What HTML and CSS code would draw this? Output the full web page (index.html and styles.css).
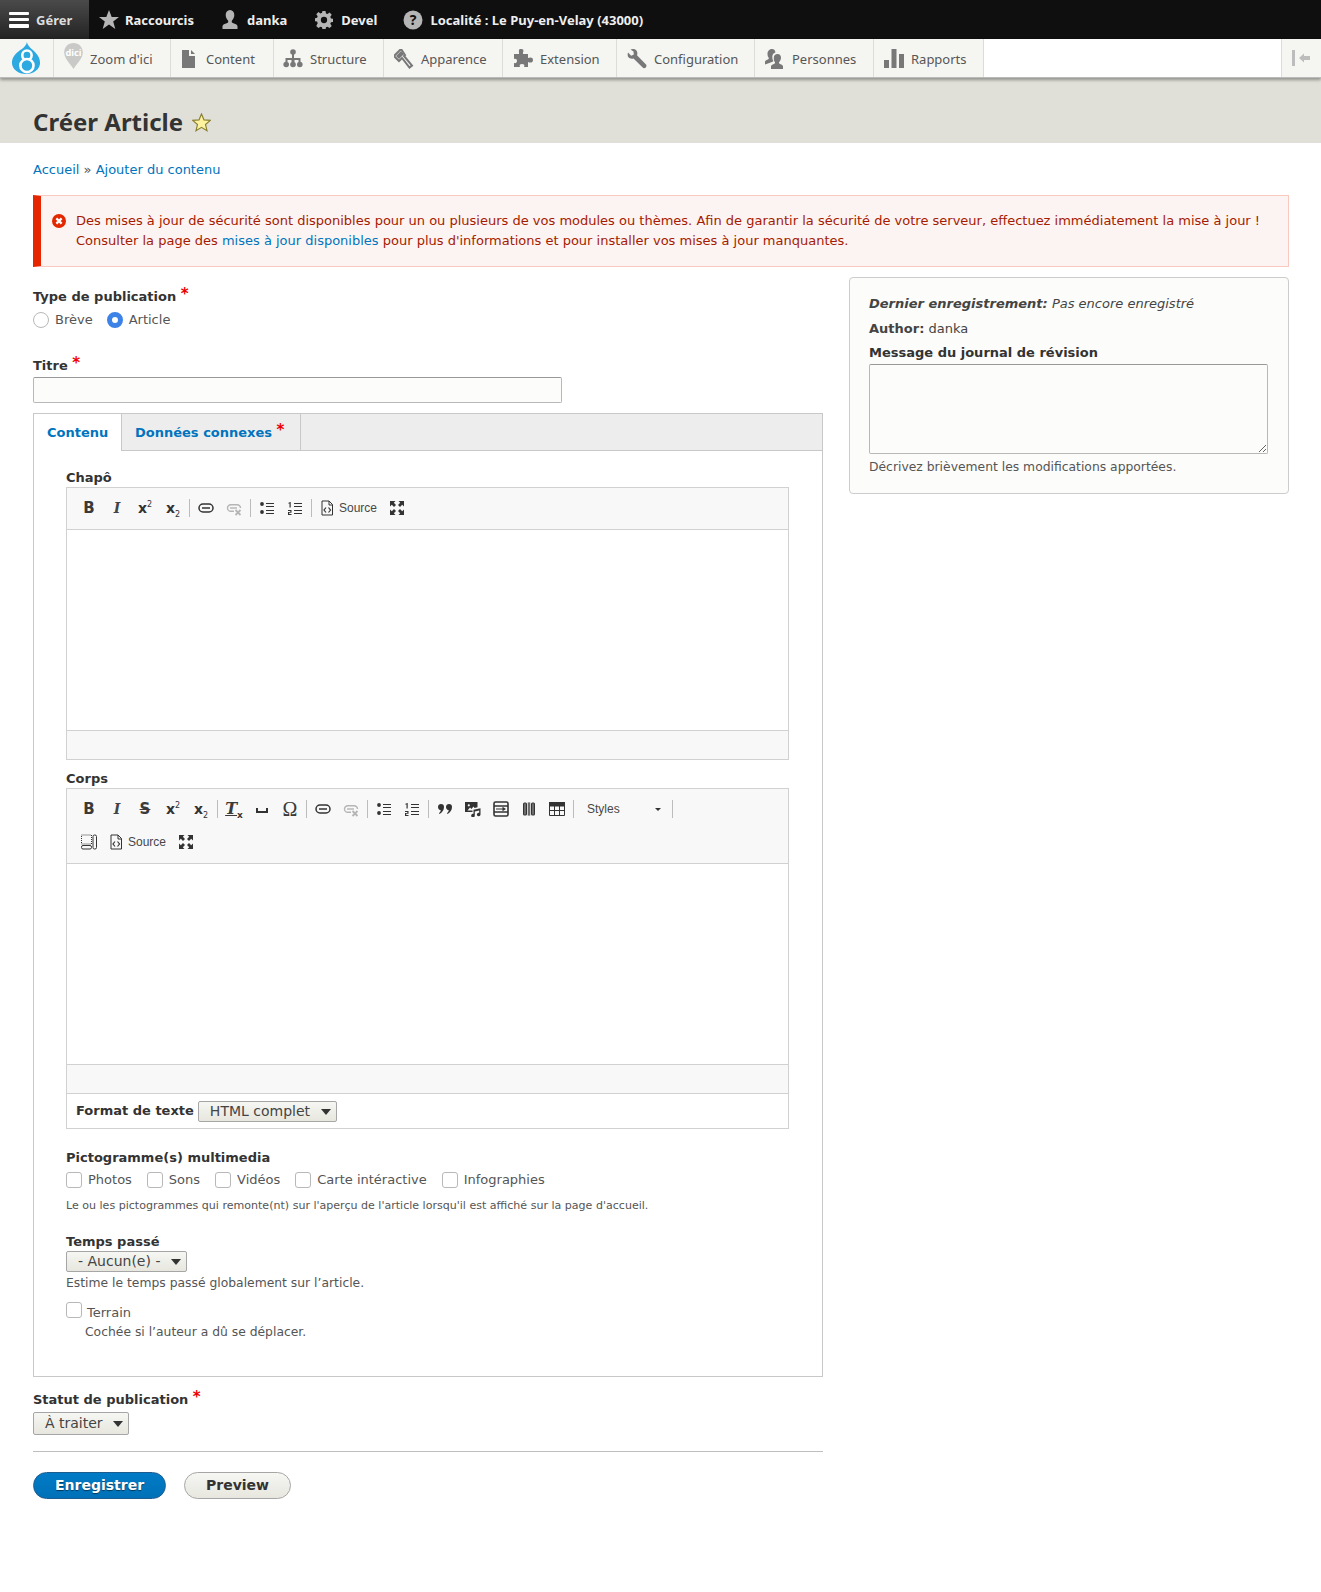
FILE: index.html
```html
<!DOCTYPE html>
<html lang="fr">
<head>
<meta charset="utf-8">
<title>Créer Article</title>
<link rel="stylesheet" href="styles.css">
</head>
<body>
<svg class="defs" width="0" height="0" aria-hidden="true">
  <symbol id="i-star" viewBox="0 0 20 20"><path d="M10 0l2.700 7H20l-5.800 4.600L16.300 19 10 14.600 3.700 19l2.100-7.400L0 7h7.300z"/></symbol>
  <symbol id="i-user" viewBox="0 0 20 20"><path d="M10 0c2.700 0 4.300 2.200 4.300 5 0 2.400-1.200 4.400-2.300 5.400-.5.600-.3 2 .4 2.400 1.800.9 4.600 1.500 5.100 3.200v3H2.500v-3c.5-1.700 3.300-2.300 5.100-3.200.7-.4.900-1.800.4-2.400C6.900 9.400 5.700 7.400 5.700 5 5.700 2.200 7.300 0 10 0z"/></symbol>
  <symbol id="i-gear" viewBox="0 0 20 20"><path fill-rule="evenodd" d="M8.300 0h3.400l.5 2.700 1.700.7L16.200 1.800l2.400 2.400-1.600 2.300.7 1.700 2.700.5v3.400l-2.700.5-.7 1.700 1.600 2.300-2.400 2.400-2.300-1.600-1.700.7-.5 2.700H8.300l-.5-2.700-1.700-.7-2.300 1.600-2.400-2.400L3 13.500l-.7-1.700L-.4 11.300V8l2.700-.5L3 5.800 1.400 3.500l2.400-2.400 2.300 1.600 1.700-.7zM10 6.500a3.500 3.500 0 1 0 0 7 3.500 3.500 0 0 0 0-7z"/></symbol>
  <symbol id="i-doc" viewBox="0 0 16 20"><path d="M1 1h7v6h6v12H1z"/><path d="M10 1l4 4h-4z"/></symbol>
  <symbol id="i-tree" viewBox="0 0 20 20"><circle cx="10" cy="3" r="2.800"/><rect x="9" y="4" width="2" height="9"/><path d="M2.500 9h15v4h-2v-2h-4v2h-3v-2h-4v2h-2z"/><circle cx="3.200" cy="15.500" r="2.800"/><circle cx="10" cy="15.500" r="2.800"/><circle cx="16.800" cy="15.500" r="2.800"/></symbol>
  <symbol id="i-hammer" viewBox="0 0 20 20"><path d="M7 0L0 7l5 5 3-3 7.500 9.500 2.500-2L10 7l1-1z" fill="none" stroke-width="2" stroke="currentColor"/><path d="M7 2L2 7l3 3 5-5z"/></symbol>
  <symbol id="i-puzzle" viewBox="0 0 20 20"><path d="M1 5h5V3.500C6 1 5.500 0 8 0s3 1 2 3.500V5h5v4c2-1 5-1 5 2s-3 3-5 2v5h-4c1-2 0-3-2-3s-3 1-2 3H1v-4c2 .5 3-.5 3-2s-1-2.500-3-2z"/></symbol>
  <symbol id="i-wrench" viewBox="0 0 20 20"><path d="M1 3.500L4.200 6.700 6.800 5.600 6.500 2.500 3.500.500C6-.5 9-.2 10 2.500c.6 1.500.4 2.800 0 3.700l9 9.300c.8 1 .6 2-.2 3-1 1-2.300 1-3.100 0L6.500 9.500C4.500 10 2.800 9.700 1.500 8.300.4 7 .5 5 1 3.500z"/></symbol>
  <symbol id="i-users" viewBox="0 0 20 20"><path d="M12.500 5c2.200 0 3.500 1.700 3.500 3.800 0 1.900-1 3.300-1.800 4.200-.4.500-.2 1.300.3 1.700 1.500.7 3.500 1.200 3.500 2.500V20H6v-2.800c0-1.300 2-1.800 3.500-2.500.5-.4.700-1.200.3-1.700C9 12.100 8.800 10.700 8.800 8.800 8.800 6.700 10.300 5 12.500 5z"/><path d="M7 0c2.200 0 3.400 1.500 3.400 3.600-2.500.7-3.300 3-3 5.300.1 1.300.5 2 1 3.100-.5.700-2 1.200-3.400 1.700L0 15.500v-2.700c0-1.300 2-1.800 3.300-2.500.5-.4.700-1.200.3-1.700C2.800 7.700 2.500 6.300 2.500 4.500 2.500 2 4.800 0 7 0z"/></symbol>
  <symbol id="i-bars" viewBox="0 0 20 20"><rect x="0" y="11" width="5" height="8"/><rect x="7.500" y="0" width="5" height="19"/><rect x="15" y="5" width="5" height="14"/></symbol>
  <symbol id="c-link" viewBox="0 0 16 16"><g fill="none" stroke="currentColor" stroke-width="1.500"><rect x="1" y="4" width="14" height="8" rx="4"/><path d="M4 8h8"/></g></symbol>
  <symbol id="c-unlink" viewBox="0 0 16 16"><g fill="none" stroke="#b5b5b5" stroke-width="1.400"><path d="M8 11.300H4.800a3.300 3.300 0 0 1 0-6.600h6.400a3.300 3.300 0 0 1 3.300 3.300"/><path d="M4 8h7"/><path d="M9.500 10l5 5M14.500 10l-5 5" stroke-width="1.800"/></g></symbol>
  <symbol id="c-ul" viewBox="0 0 16 16"><circle cx="3" cy="4" r="1.900"/><circle cx="3" cy="12" r="1.900"/><path d="M7 3h8v1H7zM7 6h8v1H7zM7 10h8v1H7zM7 13h8v1H7z"/></symbol>
  <symbol id="c-ol" viewBox="0 0 16 16"><path d="M7 3h8v1H7zM7 6h8v1H7zM7 10h8v1H7zM7 13h8v1H7z"/><path d="M2.500 2h1.200v5.500H2.500zM1.300 2.800h1.500v.8H1.300z"/><path d="M1 10h3.500v2.800H2.200v1.200h2.300v1H1v-3h2.300v-1H1z"/></symbol>
  <symbol id="c-source" viewBox="0 0 16 16"><path d="M3 1h7l3.500 3.500V15H3z" fill="none" stroke="currentColor"/><path d="M10 1v4h3.500" fill="none" stroke="currentColor"/><path d="M7 7.500L5 10l2 2.500M9.500 7.500l2 2.500-2 2.500" fill="none" stroke="currentColor" stroke-width="1.200"/></symbol>
  <symbol id="c-max" viewBox="0 0 16 16"><path d="M1 1h5.500L4.800 2.800 7 5 5 7 2.800 4.800 1 6.500zM15 1v5.500l-1.800-1.700L11 7 9 5l2.200-2.200L9.500 1zM1 15V9.500l1.800 1.700L5 9l2 2-2.200 2.200L6.500 15zM15 15H9.500l1.700-1.800L9 11l2-2 2.200 2.200L15 9.500z"/></symbol>
  <symbol id="c-space" viewBox="0 0 16 16"><path d="M2 7h2v3h8V7h2v5H2z"/></symbol>
  <symbol id="c-quote" viewBox="0 0 16 16"><path d="M4 3c2 0 3 1.300 3 3 0 3-1.800 5.500-4.500 7L2 12.200c1-.9 1.700-1.900 1.900-3C2.300 9.100 1 8 1 6c0-1.700 1.300-3 3-3zM12 3c2 0 3 1.300 3 3 0 3-1.800 5.500-4.500 7l-.5-.8c1-.9 1.700-1.900 1.900-3-1.600-.1-2.900-1.200-2.900-3.200 0-1.700 1.300-3 3-3z"/></symbol>
  <symbol id="c-media" viewBox="0 0 16 16"><path d="M0 1h12.500v5.300L9.500 7l-1-1.500L6.500 8 5 6.500 2.500 9.500h5V11H0z"/><circle cx="3.800" cy="4.300" r="1.100" fill="#f8f8f8"/><path d="M8.500 8.800l7-1.600v6.300a1.800 1.800 0 1 1-1.300-1.700V9.400l-4.400 1v4.100a1.800 1.800 0 1 1-1.300-1.700z"/></symbol>
  <symbol id="c-form" viewBox="0 0 16 16"><rect x="1" y="1" width="14" height="14" rx="1.500" fill="none" stroke="currentColor" stroke-width="1.600"/><path d="M1 4.300h14v1.400H1zM1 10.300h14v1.400H1zM3 7.400h7v1.200H3z"/><path d="M9.500 5.800L13 8l-3.500 2.200z"/></symbol>
  <symbol id="c-cols" viewBox="0 0 16 16"><rect x="2" y="1.500" width="4" height="13" rx="1.500"/><rect x="10" y="1.500" width="4" height="13" rx="1.500"/><path d="M6.800 1.500h2.400v13H6.800z"/><path d="M4 2.500v11M8 1.500v13M12 2.500v11" stroke="#f7f7f7" stroke-width=".6"/></symbol>
  <symbol id="c-table" viewBox="0 0 16 16"><path d="M0 1h16v4H0z"/><path d="M.5 1.500h15v13H.5zM.5 5h15M.5 9.500h15M5.500 5v9.500M10.500 5v9.500" fill="none" stroke="currentColor"/></symbol>
  <symbol id="c-blocks" viewBox="0 0 16 16"><rect x=".5" y="1" width="10" height="9" fill="none" stroke="currentColor" stroke-dasharray="1 1"/><rect x=".5" y="11.500" width="10" height="3.500" rx="1.500" fill="none" stroke="currentColor"/><rect x="12" y="1" width="3.500" height="14" rx="1.500" fill="none" stroke="currentColor"/></symbol>
</svg>

<header class="bar-top">
  <a class="top-item top-active">
    <span class="burger"><i></i><i></i><i></i></span>Gérer
  </a>
  <a class="top-item top-short"><svg class="top-ic"><use href="#i-star"/></svg>Raccourcis</a>
  <a class="top-item"><svg class="top-ic"><use href="#i-user"/></svg>danka</a>
  <a class="top-item"><svg class="top-ic top-gear"><use href="#i-gear"/></svg>Devel</a>
  <a class="top-item top-last">
    <svg class="top-ic" viewBox="0 0 20 20"><circle cx="10" cy="10" r="9.500"/><text x="10" y="15" class="help-q">?</text></svg>Localité : Le Puy-en-Velay (43000)
  </a>
</header>

<nav class="bar-nav">
  <a class="nav-logo">
    <svg viewBox="0 0 32 34" width="30" height="32">
      <path d="M17 0c1 5 5 7 9 11 3 3 5 7 5 11 0 7-7 12-15 12S1 29 1 22c0-5 3-9 7-12 4-3 8-5 9-10z" fill="#2ba9e0"/>
      <circle cx="17" cy="14" r="5" fill="#2ba9e0" stroke="#fff" stroke-width="2.800"/>
      <circle cx="17" cy="25" r="7" fill="#2ba9e0" stroke="#fff" stroke-width="2.800"/>
    </svg>
  </a>
  <a class="nav-item w-zoom">
    <svg class="pin" viewBox="0 0 20 28" width="19" height="26"><path d="M10 0c6 0 10 4.500 10 10.500 0 6-6 11-10 17.500C6 21.500 0 16.500 0 10.500 0 4.500 4 0 10 0z" fill="#c9c9c7"/><text x="10" y="14" class="pin-t">dici</text></svg>
    Zoom d'ici
  </a>
  <a class="nav-item w-content"><svg class="nav-ic nav-doc"><use href="#i-doc"/></svg>Content</a>
  <a class="nav-item w-structure"><svg class="nav-ic nav-tree"><use href="#i-tree"/></svg>Structure</a>
  <a class="nav-item w-apparence"><svg class="nav-ic"><use href="#i-hammer"/></svg>Apparence</a>
  <a class="nav-item w-extension"><svg class="nav-ic"><use href="#i-puzzle"/></svg>Extension</a>
  <a class="nav-item w-config"><svg class="nav-ic"><use href="#i-wrench"/></svg>Configuration</a>
  <a class="nav-item w-people"><svg class="nav-ic"><use href="#i-users"/></svg>Personnes</a>
  <a class="nav-item w-reports"><svg class="nav-ic"><use href="#i-bars"/></svg>Rapports</a>
  <span class="nav-fill"></span>
  <a class="nav-toggle">
    <svg viewBox="0 0 20 16" width="20" height="16"><rect x="0" y="0" width="3" height="16" fill="#bdbdbd"/><path d="M7 8l5-4.500V6h6v4h-6v2.500z" fill="#bdbdbd"/></svg>
  </a>
</nav>

<div class="page-head">
  <h1 class="page-title">Créer Article
    <svg class="fav" viewBox="0 0 20 20" width="19" height="19"><path d="M10 1l2.600 6.200 6.700.5-5.100 4.400 1.600 6.600L10 15.100l-5.800 3.600 1.600-6.600L.7 7.700l6.700-.5z" fill="#fff3a0" stroke="#8a8030" stroke-width="1.200"/></svg>
  </h1>
</div>

<main class="content">
  <div class="crumbs"><a href="#">Accueil</a> » <a href="#">Ajouter du contenu</a></div>

  <div class="msg">
    <svg class="msg-ic" viewBox="0 0 16 16" width="14" height="14"><circle cx="8" cy="8" r="8" fill="#e32700"/><path d="M5 5l6 6M11 5l-6 6" stroke="#fff" stroke-width="2.600"/></svg>
    <div>Des mises à jour de sécurité sont disponibles pour un ou plusieurs de vos modules ou thèmes. Afin de garantir la sécurité de votre serveur, effectuez immédiatement la mise à jour !<br>Consulter la page des <a href="#">mises à jour disponibles</a> pour plus d'informations et pour installer vos mises à jour manquantes.</div>
  </div>

  <form class="layout">
    <div class="col-main">
      <div class="lbl">Type de publication <span class="req">*</span></div>
      <div class="radios">
        <label class="opt"><input type="radio" name="t" class="radio">Brève</label>
        <label class="opt"><input type="radio" name="t" class="radio" checked>Article</label>
      </div>

      <div class="lbl lbl-titre">Titre <span class="req">*</span></div>
      <input type="text" class="txt">

      <section class="tabs">
        <div class="tab-bar">
          <a class="tab tab-on">Contenu</a>
          <a class="tab tab-data">Données connexes <span class="req">*</span></a>
        </div>
        <div class="panel">
          <div class="lbl">Chapô</div>
          <div class="cke">
            <div class="cke-tools">
              <div class="cke-row">
                <a class="cb"><span class="g g-b">B</span></a>
                <a class="cb"><span class="g g-i">I</span></a>
                <a class="cb"><span class="g g-x">x<sup>2</sup></span></a>
                <a class="cb"><span class="g g-x">x<sub>2</sub></span></a>
                <i class="sep"></i>
                <a class="cb"><svg class="ci"><use href="#c-link"/></svg></a>
                <a class="cb"><svg class="ci"><use href="#c-unlink"/></svg></a>
                <i class="sep"></i>
                <a class="cb"><svg class="ci"><use href="#c-ul"/></svg></a>
                <a class="cb"><svg class="ci"><use href="#c-ol"/></svg></a>
                <i class="sep"></i>
                <a class="cb cb-src"><svg class="ci"><use href="#c-source"/></svg><span>Source</span></a>
                <a class="cb"><svg class="ci"><use href="#c-max"/></svg></a>
              </div>
            </div>
            <div class="cke-body"></div>
            <div class="cke-foot"></div>
          </div>

          <div class="lbl lbl-corps">Corps</div>
          <div class="cke">
            <div class="cke-tools">
              <div class="cke-row">
                <a class="cb"><span class="g g-b">B</span></a>
                <a class="cb"><span class="g g-i">I</span></a>
                <a class="cb"><span class="g g-s">S</span></a>
                <a class="cb"><span class="g g-x">x<sup>2</sup></span></a>
                <a class="cb"><span class="g g-x">x<sub>2</sub></span></a>
                <i class="sep"></i>
                <a class="cb"><span class="g g-tx">T<sub>x</sub></span></a>
                <a class="cb"><svg class="ci"><use href="#c-space"/></svg></a>
                <a class="cb"><span class="g g-om">Ω</span></a>
                <i class="sep"></i>
                <a class="cb"><svg class="ci"><use href="#c-link"/></svg></a>
                <a class="cb"><svg class="ci"><use href="#c-unlink"/></svg></a>
                <i class="sep"></i>
                <a class="cb"><svg class="ci"><use href="#c-ul"/></svg></a>
                <a class="cb"><svg class="ci"><use href="#c-ol"/></svg></a>
                <i class="sep"></i>
                <a class="cb"><svg class="ci"><use href="#c-quote"/></svg></a>
                <a class="cb"><svg class="ci"><use href="#c-media"/></svg></a>
                <a class="cb"><svg class="ci"><use href="#c-form"/></svg></a>
                <a class="cb"><svg class="ci"><use href="#c-cols"/></svg></a>
                <a class="cb"><svg class="ci"><use href="#c-table"/></svg></a>
                <i class="sep"></i>
                <a class="cb-styles"><span>Styles</span><i class="caret"></i></a>
                <i class="sep"></i>
              </div>
              <div class="cke-row">
                <a class="cb"><svg class="ci"><use href="#c-blocks"/></svg></a>
                <a class="cb cb-src"><svg class="ci"><use href="#c-source"/></svg><span>Source</span></a>
                <a class="cb"><svg class="ci"><use href="#c-max"/></svg></a>
              </div>
            </div>
            <div class="cke-body"></div>
            <div class="cke-foot"></div>
            <div class="cke-format">
              <span class="fmt-lbl">Format de texte</span>
              <span class="sel sel-fmt">HTML complet</span>
            </div>
          </div>

          <div class="lbl lbl-picto">Pictogramme(s) multimedia</div>
          <div class="checks">
            <label class="chk-opt"><input type="checkbox" class="chk">Photos</label>
            <label class="chk-opt"><input type="checkbox" class="chk">Sons</label>
            <label class="chk-opt"><input type="checkbox" class="chk">Vidéos</label>
            <label class="chk-opt"><input type="checkbox" class="chk">Carte intéractive</label>
            <label class="chk-opt"><input type="checkbox" class="chk">Infographies</label>
          </div>
          <p class="hint-small">Le ou les pictogrammes qui remonte(nt) sur l'aperçu de l'article lorsqu'il est affiché sur la page d'accueil.</p>

          <div class="lbl lbl-temps">Temps passé</div>
          <span class="sel sel-temps">- Aucun(e) -</span>
          <p class="hint hint-temps">Estime le temps passé globalement sur l’article.</p>

          <label class="terrain"><input type="checkbox" class="chk">Terrain</label>
          <p class="hint hint-in">Cochée si l’auteur a dû se déplacer.</p>
        </div>
      </section>

      <div class="lbl lbl-statut">Statut de publication <span class="req">*</span></div>
      <span class="sel sel-statut">À traiter</span>
      <hr class="rule">
      <div class="actions">
        <button type="button" class="btn btn-primary">Enregistrer</button>
        <button type="button" class="btn">Preview</button>
      </div>
    </div>

    <aside class="side">
      <div class="side-line"><em><b>Dernier enregistrement:</b> Pas encore enregistré</em></div>
      <div class="side-line side-author"><b>Author:</b> danka</div>
      <div class="lbl side-msg">Message du journal de révision</div>
      <textarea class="area"></textarea>
      <p class="hint side-hint">Décrivez brièvement les modifications apportées.</p>
    </aside>
  </form>
</main>
</body>
</html>
```

FILE: styles.css
```css
* { box-sizing: border-box; }
html, body { margin: 0; padding: 0; background: #fff; }
body { min-height: 1592px; font: 13px/20px "DejaVu Sans", sans-serif; color: #333; }
a { color: #0074bd; text-decoration: none; }
.defs { position: absolute; }

/* top bar */
.bar-top { display: flex; height: 39px; background: #0f0f0f; font: bold 13px/40px "Noto Sans", sans-serif; color: #fff; }
.top-item { display: flex; align-items: center; padding: 0 14px 0 10px; color: #eee; margin-right: 3px; }
.top-active { width: 89px; padding: 0 0 0 9px; margin-right: 0; background: linear-gradient(#4a4a4a, #232323); color: #ddd; }
.top-short { padding-right: 13px; }
.top-last { padding-left: 9px; }
.burger { display: flex; flex-direction: column; justify-content: space-between; width: 20px; height: 16px; margin-right: 7px; }
.burger i { display: block; height: 3.500px; border-radius: 1px; background: #fff; }
.top-ic { width: 20px; height: 20px; margin-right: 7px; fill: #b5b5b5; }
.top-short .top-ic { margin-right: 6px; }
.top-gear { padding: 1px; }
.help-q { font: bold 14px "Noto Sans", sans-serif; fill: #0f0f0f; text-anchor: middle; }

/* nav bar */
.bar-nav { display: flex; position: relative; height: 39px; background: #fff; font: 13px/38px "Noto Sans", sans-serif; color: #565656; border-bottom: 1px solid #bbb; box-shadow: 0 2px 3px rgba(0,0,0,.35); }
.nav-logo { display: flex; align-items: center; justify-content: center; width: 54px; padding-right: 2px; background: #f5f5f2; border-right: 1px solid #dcdcd8; }
.nav-item { display: flex; align-items: center; padding: 2px 0 0 10px; background: #f5f5f2; color: #565656; border-right: 1px solid #dcdcd8; }
.nav-ic { width: 20px; height: 20px; margin-right: 7px; fill: #787878; color: #787878; flex: none; }
.nav-doc { width: 16px; margin: 0 9px 0 0; }
.nav-tree { margin: 0 7px 0 -1px; }
.pin { margin-right: 7px; margin-top: -6px; flex: none; }
.pin-t { font: bold 10px "Noto Sans", sans-serif; fill: #fff; text-anchor: middle; }
.w-zoom { width: 117px; }
.w-content { width: 103px; }
.w-structure { width: 110px; }
.w-apparence { width: 119px; }
.w-extension { width: 114px; }
.w-config { width: 138px; }
.w-people { width: 119px; }
.w-reports { width: 110px; }
.nav-fill { flex: 1; }
.nav-toggle { display: flex; align-items: center; justify-content: center; width: 40px; background: #f5f5f2; border-left: 1px solid #dcdcd8; }

/* head */
.page-head { height: 65px; padding: 28px 0 0 33px; background: #e0e0d8; }
.page-title { display: flex; align-items: center; margin: 0; font: bold 24px/32px "Noto Sans", sans-serif; color: #333; }
.fav { margin-left: 9px; }

/* content */
.content { padding: 17px 32px 0 33px; }
.crumbs { color: #555; }
.msg { display: flex; height: 72px; margin-top: 15px; padding: 15px 10px 0 8px; color: #a51b00; background: #fcf4f2; border: 1px solid #f9c9bf; border-left: 8px solid #e62600; }
.msg-ic { flex: none; margin: 3px 10px 0 3px; }
.layout { display: grid; grid-template-columns: 790px 440px; column-gap: 26px; align-items: start; margin-top: 10px; }
.col-main { padding-top: 10px; }

.lbl { font-weight: bold; color: #333; }
.req { position: relative; top: -2px; color: #e00; font-size: 15px; line-height: 0; }
.radios { display: flex; margin-top: 3px; color: #555; }
.opt { display: flex; align-items: center; margin-right: 14px; }
.radio { appearance: none; width: 16px; height: 16px; margin: 0 6px 0 0; border: 1px solid #b8b8b8; border-radius: 50%; background: #fff; }
.radio:checked { border: 5px solid #3d82e6; }
.lbl-titre { margin-top: 26px; }
.txt { display: block; width: 529px; height: 26px; margin-top: 1px; background: #fcfcfa; border: 1px solid #b8b8b8; border-top-color: #999; border-radius: 2px; }

.tabs { margin-top: 10px; border: 1px solid #c8c8c8; }
.tab-bar { display: flex; height: 37px; background: #ededed; border-bottom: 1px solid #c8c8c8; font-weight: bold; line-height: 38px; }
.tab { padding: 0 13px; border-right: 1px solid #c8c8c8; }
.tab-on { width: 88px; margin-bottom: -1px; height: 37px; background: #fff; }
.tab-data { padding-right: 16px; }
.panel { padding: 17px 32px 34px 32px; }

.cke { margin-top: -1px; width: 723px; border: 1px solid #d1d1d1; font-family: "Liberation Sans", sans-serif; }
.cke-tools { padding: 4px 8px 5px; background: #f8f8f8; border-bottom: 1px solid #d1d1d1; }
.cke-row { display: flex; align-items: center; height: 32px; }
.cke-row + .cke-row { margin-top: 1px; }
.cb { display: flex; align-items: center; justify-content: center; flex: none; width: 28px; height: 28px; color: #333; fill: #333; }
.ci { width: 16px; height: 16px; fill: #333; color: #333; }
.sep { flex: none; width: 1px; height: 18px; margin: 0 2px; background: #bcbcbc; }
.cb-src { width: 69px; justify-content: flex-start; padding-left: 5px; font-size: 12px; color: #474747; }
.cb-src span { margin-left: 4px; }
.g { display: block; line-height: 16px; color: #333; }
.g-b { font: bold 15px/16px "DejaVu Sans", sans-serif; color: #3a3a3a; }
.g-i { font: italic bold 14px/16px "DejaVu Serif", serif; color: #444; }
.g-s { font: bold 15px/16px "DejaVu Sans", sans-serif; color: #3a3a3a; text-decoration: line-through; }
.g-x { font: bold 14px/16px "DejaVu Sans", sans-serif; }
.g-x sup, .g-x sub { font-size: 8px; line-height: 0; font-weight: normal; }
.g-tx { font: italic bold 16px/16px "DejaVu Serif", serif; text-decoration: underline; color: #3a3a3a; }
.g-tx sub { font: bold 9px/0 "DejaVu Sans", sans-serif; }
.g-om { font: 20px/16px "Liberation Serif", serif; color: #3a3a3a; }
.cb-styles { display: flex; align-items: center; justify-content: space-between; flex: none; width: 94px; padding: 0 9px 0 11px; font-size: 12px; color: #474747; }
.caret { width: 0; height: 0; border: 3px solid transparent; border-top-color: #333; border-bottom: 0; }
.cke-body { height: 200px; background: #fff; }
.cke-foot { height: 29px; background: #f8f8f8; border-top: 1px solid #d1d1d1; }
.cke-format { display: flex; align-items: center; height: 35px; padding-left: 9px; background: #fff; border-top: 1px solid #d1d1d1; font-family: "DejaVu Sans", sans-serif; }
.fmt-lbl { font-weight: bold; margin-right: 4px; }
.lbl-corps { margin-top: 9px; }

.sel { display: block; position: relative; height: 21px; padding: 0 0 0 11px; font: 14px/19px "DejaVu Sans", sans-serif; color: #444; background: linear-gradient(#f6f6f3, #e7e7df); border: 1px solid #a6a6a6; border-radius: 2px; }
.sel::after { content: ""; position: absolute; right: 5px; top: 7px; border: 5px solid transparent; border-top: 6px solid #333; border-bottom: 0; }
.sel-fmt { width: 139px; }
.sel-temps { width: 121px; margin-top: -1px; }
.sel-statut { width: 96px; height: 23px; margin-top: 2px; line-height: 20px; }
.sel-statut::after { top: 8px; }

.lbl-picto { margin-top: 19px; }
.checks { display: flex; margin-top: 2px; color: #555; }
.chk-opt { display: flex; align-items: center; }
.chk-opt + .chk-opt { margin-left: 15px; }
.chk { appearance: none; flex: none; width: 16px; height: 16px; margin: 0 6px 0 0; background: #fff; border: 1px solid #b8b8b8; border-radius: 3px; }
.hint-small { margin: 8px 0 0; font-size: 11.050px; line-height: 16px; color: #555; }
.lbl-temps { margin-top: 18px; }
.hint { margin: 0; font-size: 12.350px; color: #555; }
.hint-temps { margin-top: 1px; }
.terrain { display: flex; align-items: flex-start; height: 20px; margin-top: 9px; line-height: 21px; color: #555; }
.terrain .chk { margin-right: 5px; }
.hint-in { padding-left: 19px; }

.lbl-statut { margin-top: 13px; }
.rule { height: 1px; margin: 16px 0 0; border: 0; background: #bebebe; }
.actions { display: flex; margin-top: 20px; }
.btn { height: 27px; min-width: 107px; margin-right: 18px; padding: 0 20px; font: bold 14px/25px "DejaVu Sans", sans-serif; color: #333; background: linear-gradient(#f6f6f3, #e7e7df); border: 1px solid #a6a6a6; border-radius: 14px; }
.btn-primary { width: 133px; color: #fff; background: linear-gradient(#007bc6, #0071b8); border-color: #1e5c90; text-shadow: 0 1px 1px rgba(0,0,0,.5); }

.side { padding: 16px 20px 16px 19px; background: #fcfcfa; border: 1px solid #ccc; border-radius: 4px; }
.side-author { margin-top: 5px; }
.side-msg { margin-top: 4px; }
.side-line { color: #444; }
.area { display: block; width: 399px; height: 90px; margin-top: 1px; background: #fcfcfa; border: 1px solid #b8b8b8; border-top-color: #999; border-radius: 2px; }
.side-hint { margin-top: 3px; }
```
